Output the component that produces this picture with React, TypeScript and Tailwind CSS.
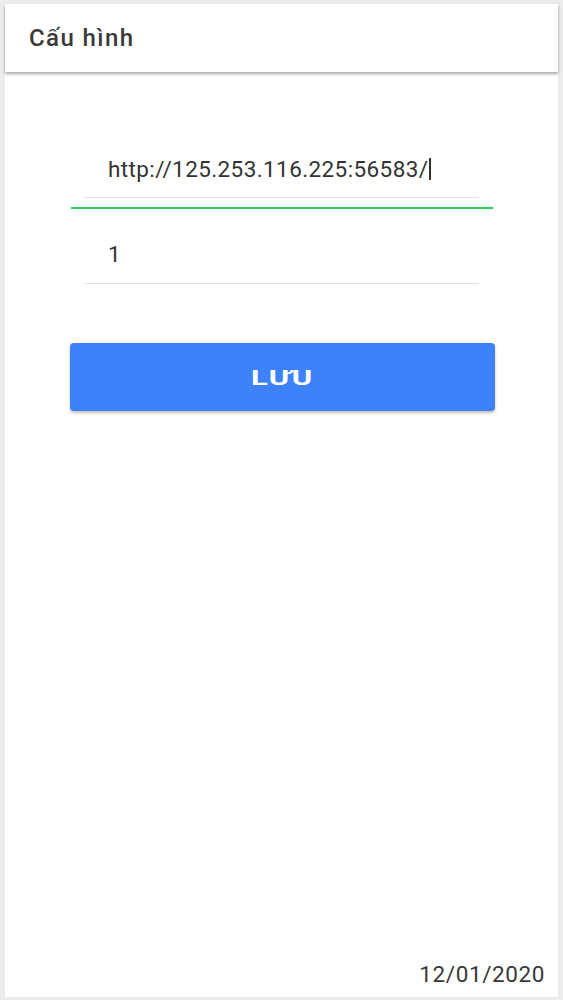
const App = () => (
  <div className="h-[1000px] w-[563px] bg-[#ececec] pl-[5px] pr-[5px] pt-[4px] pb-[3px] font-['Roboto','Liberation_Sans',sans-serif] text-[#333]">
    <div className="flex h-full flex-col bg-white">
      <header className="h-[68px] bg-white pl-[24px] pt-[22px] shadow-[0_2px_3px_rgba(0,0,0,0.35)]">
        <h1 className="text-[24px] leading-none font-medium tracking-[1.4px] text-[#3a3a3a]">Cấu hình</h1>
      </header>

      <main className="flex flex-1 flex-col px-[65px] pt-[78px]">
        <div className="px-[14px]">
          <div className="flex h-[48px] items-start border-b border-[#e2e2e2] pl-[24px] pt-[8px] text-[22.5px] leading-none tracking-[0.4px]">
            http://125.253.116.225:56583/
            <span className="ml-[1px] inline-block h-[22px] w-[2px] bg-[#333]" />
          </div>
        </div>
        <div className="ml-[1px] mt-[9px] h-[2px] bg-[#2ecc5a]" />
        <div className="px-[14px]">
          <div className="h-[75px] border-b border-[#e2e2e2] pl-[24px] pt-[34px] text-[22.5px] leading-none">1</div>
        </div>

        <button className="mt-[59px] flex h-[68px] w-[425px] items-center justify-center rounded-[4px] bg-[#3d82f8] text-white shadow-[0_2px_3px_rgba(0,0,0,0.25)]">
          <span className="mt-[2px] inline-block scale-x-[1.55] text-[20px] font-bold leading-normal tracking-[0.6px]">LƯU</span>
        </button>
      </main>

      <footer className="flex justify-end pb-[12px] pr-[13px] text-[22.5px] leading-none tracking-[0.6px] text-[#383838]">12/01/2020</footer>
    </div>
  </div>
);

export default App;
